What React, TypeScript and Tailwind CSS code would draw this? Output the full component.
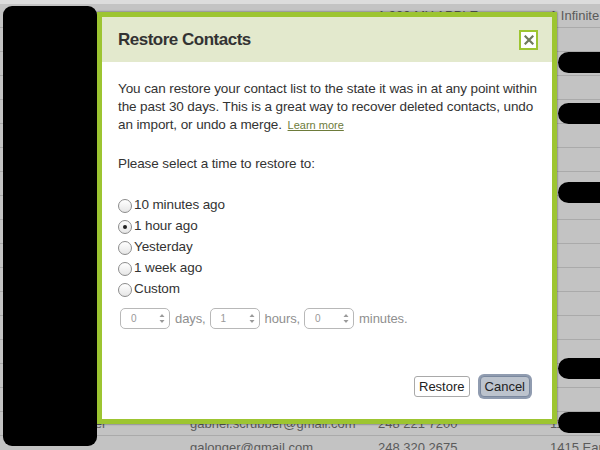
import React from 'react';

// Background contact rows (mostly hidden behind the dialog)
const rows: { name: string; email: string; phone: string; addr: string }[] = [
  { name: 'Apple Store', email: '', phone: '1,900 MY APPLE', addr: '1 Infinite' },
  ...Array.from({ length: 16 }, () => ({ name: '', email: '', phone: '', addr: '' })),
  { name: 'Gabriel Scrubber', email: 'gabriel.scrubber@gmail.com', phone: '248 221 7200', addr: '11' },
  { name: '', email: 'galonger@gmail.com', phone: '248 320 2675', addr: '1415 Ear' },
];

const redactRight = [52, 103, 182, 358, 412];

function Radio({ checked = false }: { checked?: boolean }) {
  return (
    <span className="w-[14px] h-[14px] rounded-full border border-[#8c8c8c] bg-gradient-to-b from-white to-[#e6e6e6] flex items-center justify-center shrink-0">
      {checked && <span className="w-[4px] h-[4px] rounded-full bg-[#222]" />}
    </span>
  );
}

function Spinner({ value }: { value: string }) {
  return (
    <div className="w-[50px] h-[21px] rounded-[5px] border border-[#b8b8b8] bg-white flex items-center shrink-0">
      <span className="pl-[10px] text-[10px] text-[#999] w-[38px]">{value}</span>
      <svg width="6" height="11" viewBox="0 0 6 11">
        <path d="M3 1 L5.5 4 L0.5 4 Z" fill="#9a9a9a" />
        <path d="M3 10 L5.5 7 L0.5 7 Z" fill="#9a9a9a" />
      </svg>
    </div>
  );
}

export default function App() {
  return (
    <div className="relative w-[600px] h-[450px] overflow-hidden bg-[#c3c3c3] font-['Liberation_Sans',Arial,sans-serif]">
      {/* top light strip */}
      <div className="h-[4px] bg-[#dcdcdc]" />

      {/* contacts table behind */}
      <div className="flex flex-col">
        {rows.map((r, i) => (
          <div
            key={i}
            className="h-[24px] grid grid-cols-[190px_188px_170px_1fr] items-center border-b border-[#aaaaaa] text-[13px] text-[#5a5a5a] whitespace-nowrap"
          >
            <span className="pl-[8px]">{r.name}</span>
            <span>{r.email}</span>
            <span>{r.phone}</span>
            <span className="pl-[2px]">{r.addr}</span>
          </div>
        ))}
      </div>

      {/* redactions */}
      <div className="absolute left-[3px] top-[6px] w-[94px] h-[440px] bg-black rounded-[9px]" />
      {redactRight.map((y) => (
        <div key={y} className="absolute left-[558px] w-[70px] h-[21px] bg-black rounded-full" style={{ top: y }} />
      ))}

      {/* Restore dialog */}
      <div className="absolute left-[97px] top-[12px] w-[460px] h-[412px] border-[5px] border-[#9dc531] bg-white shadow-[0_0_2px_rgba(0,0,0,0.6)] flex flex-col">
        <div className="h-[45px] bg-[#e3e9cd] flex items-center justify-between pl-[16px] pr-[14px]">
          <h1 className="text-[17px] font-bold text-[#333] tracking-[-0.5px]">Restore Contacts</h1>
          <div className="w-[19px] h-[20px] border-2 border-[#9dc531] bg-white flex items-center justify-center">
            <svg width="10" height="10" viewBox="0 0 10 10">
              <path d="M1.5 1.5 L8.5 8.5 M8.5 1.5 L1.5 8.5" stroke="#6f7b5c" strokeWidth="2.2" strokeLinecap="square" />
            </svg>
          </div>
        </div>

        <div className="pl-[16px] pr-[12px] pt-[18px] text-[13.5px] text-[#333] tracking-[-0.1px]">
          <p className="leading-[18px]">
            You can restore your contact list to the state it was in at any point within the past 30 days. This is a
            great way to recover deleted contacts, undo an import, or undo a merge.{' '}
            <a className="ml-[2px] text-[11px] text-[#6d7b3a] underline tracking-normal">Learn more</a>
          </p>

          <p className="mt-[21px] leading-[18px]">Please select a time to restore to:</p>

          <div className="mt-[22px] flex flex-col">
            {['10 minutes ago', '1 hour ago', 'Yesterday', '1 week ago', 'Custom'].map((t, i) => (
              <label key={t} className="h-[21px] flex items-center gap-[2px]">
                <Radio checked={i === 1} />
                <span>{t}</span>
              </label>
            ))}
          </div>

          <div className="mt-[8px] pl-[2px] flex items-center text-[13px] text-[#8f8f8f]">
            <Spinner value="0" />
            <span className="ml-[5px] mr-[4px]">days,</span>
            <Spinner value="1" />
            <span className="ml-[5px] mr-[4px]">hours,</span>
            <Spinner value="0" />
            <span className="ml-[5px]">minutes.</span>
          </div>

          <div className="mt-[47px] flex justify-end gap-[10px] pr-[10px] tracking-normal">
            <button className="h-[21px] px-[4px] border border-[#a9a9a9] rounded-[3px] bg-white text-[13px] text-[#222]">
              Restore
            </button>
            <button className="h-[21px] px-[4px] border border-[#7a889e] rounded-[4px] bg-[#bcc3cd] text-[13px] text-[#222] shadow-[0_0_0_2px_#909cb0]">
              Cancel
            </button>
          </div>
        </div>
      </div>
    </div>
  );
}
